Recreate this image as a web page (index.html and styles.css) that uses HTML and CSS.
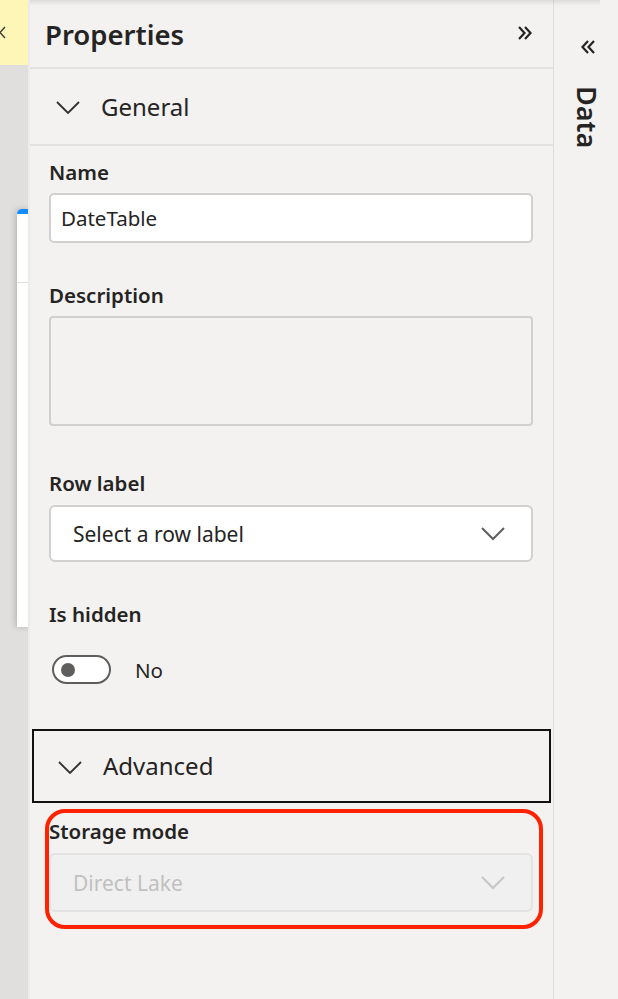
FILE: index.html
```html
<!DOCTYPE html>
<html lang="en">
<head>
<meta charset="utf-8">
<title>Properties</title>
<link rel="stylesheet" href="styles.css">
</head>
<body>
<div class="app">
  <div class="strip">
    <div class="strip-top">
      <svg class="strip-chev" width="8" height="14" viewBox="0 0 8 14"><polyline points="6,1 1,6.5 6,12" fill="none" stroke="#3b3a39" stroke-width="1.4"/></svg>
    </div>
    <div class="strip-card">
      <div class="strip-card-head"></div>
    </div>
  </div>

  <div class="props">
    <div class="props-head">
      <span class="props-title">Properties</span>
      <svg class="dbl" width="16" height="14" viewBox="0 0 16 14"><path d="M2 1 L7.5 7 L2 13 M8 1 L13.5 7 L8 13" fill="none" stroke="#252423" stroke-width="2.2"/></svg>
    </div>

    <div class="section">
      <svg class="sec-chev" width="24" height="13" viewBox="0 0 24 13"><polyline points="1,1 12,12 23,1" fill="none" stroke="#323130" stroke-width="1.8"/></svg>
      <span class="sec-title">General</span>
    </div>

    <div class="form">
      <div class="label l-name">Name</div>
      <div class="input">DateTable</div>

      <div class="label l-desc">Description</div>
      <div class="textarea"></div>

      <div class="label l-row">Row label</div>
      <div class="select">
        <span>Select a row label</span>
        <svg class="dd-chev" width="24" height="14" viewBox="0 0 24 14"><polyline points="1,1 12,12 23,1" fill="none" stroke="#605e5c" stroke-width="2"/></svg>
      </div>

      <div class="label l-hidden">Is hidden</div>
      <div class="toggle-row">
        <div class="toggle"><div class="knob"></div></div>
        <span class="toggle-text">No</span>
      </div>
    </div>

    <div class="section section-adv">
      <svg class="sec-chev" width="24" height="13" viewBox="0 0 24 13"><polyline points="1,1 12,12 23,1" fill="none" stroke="#323130" stroke-width="1.8"/></svg>
      <span class="sec-title">Advanced</span>
    </div>

    <div class="storage">
      <div class="label l-storage">Storage mode</div>
      <div class="select select-disabled">
        <span>Direct Lake</span>
        <svg class="dd-chev" width="24" height="14" viewBox="0 0 24 14"><polyline points="1,1 12,12 23,1" fill="none" stroke="#c8c6c4" stroke-width="2"/></svg>
      </div>
      <div class="highlight"></div>
    </div>
  </div>

  <div class="side">
    <svg class="side-chev" width="16" height="14" viewBox="0 0 16 14"><path d="M14 1 L8.5 7 L14 13 M8 1 L2.5 7 L8 13" fill="none" stroke="#252423" stroke-width="2.2"/></svg>
    <span class="side-title">Data</span>
  </div>

  <div class="top-shadow"></div>
</div>
</body>
</html>
```

FILE: styles.css
```css
* { box-sizing: border-box; }

html, body {
  margin: 0;
  padding: 0;
}

body {
  width: 618px;
  height: 999px;
  overflow: hidden;
  font-family: "Noto Sans", "Open Sans", sans-serif;
  color: #252423;
  background: #f3f2f1;
}

.app {
  position: relative;
  display: grid;
  grid-template-columns: 30px 524px 64px;
  height: 999px;
}

/* left strip */
.strip {
  background: #e1dfdd;
  border-right: 2px solid #edebe9;
  display: flex;
  flex-direction: column;
  overflow: hidden;
}

.strip-top {
  height: 65px;
  background: #fdf6b6;
  display: flex;
  align-items: flex-start;
  padding-top: 26px;
  margin-left: -1px;
}

.strip-card {
  margin-top: 144px;
  margin-left: 17px;
  width: 14px;
  height: 418px;
  background: #ffffff;
  border-top: 5px solid #118dff;
  border-top-left-radius: 5px;
  box-shadow: -2px 0 6px rgba(0, 0, 0, 0.18);
}

.strip-card-head {
  height: 69px;
  border-bottom: 1px solid #e1dfdd;
}

/* properties panel */
.props {
  background: #f3f2f1;
  border-right: 1px solid #e1dfdd;
  display: flex;
  flex-direction: column;
}

.props-head {
  height: 69px;
  border-bottom: 2px solid #e4e2e0;
  display: flex;
  align-items: center;
  justify-content: space-between;
  padding: 0 20px 0 15px;
}

.props-title {
  font-size: 27.5px;
  font-weight: 600;
  line-height: 36px;
  margin-top: 2px;
}

.dbl { margin-top: -2px; }

.section {
  height: 77px;
  border-bottom: 2px solid #e4e2e0;
  display: flex;
  align-items: center;
  padding-left: 26px;
  gap: 21px;
}

.sec-title {
  font-size: 24px;
  line-height: 32px;
  color: #252423;
}

.sec-chev { margin-top: 2px; }

.form {
  display: flex;
  flex-direction: column;
  padding: 0 20px 0 19px;
}

.label {
  font-size: 20.5px;
  font-weight: 600;
  line-height: 26px;
  color: #252423;
}

.l-name { margin-top: 13px; margin-bottom: 8px; }
.l-desc { margin-top: 39px; margin-bottom: 8px; }
.l-row { margin-top: 44px; margin-bottom: 9px; }
.l-hidden { margin-top: 39px; margin-bottom: 28px; }

.input {
  height: 50px;
  background: #ffffff;
  border: 2px solid #d2d0ce;
  border-radius: 5px;
  padding-left: 10px;
  display: flex;
  align-items: center;
  font-size: 20.5px;
}

.textarea {
  height: 110px;
  background: #f3f2f1;
  border: 2px solid #d2d0ce;
  border-radius: 4px;
}

.select {
  height: 57px;
  background: #ffffff;
  border: 2px solid #d2d0ce;
  border-radius: 6px;
  display: flex;
  align-items: center;
  justify-content: space-between;
  padding: 0 26px 0 22px;
  font-size: 21px;
}

.toggle-row {
  display: flex;
  align-items: center;
  gap: 24px;
  padding-left: 3px;
}

.toggle {
  width: 59px;
  height: 29px;
  border: 2px solid #605e5c;
  border-radius: 15px;
  display: flex;
  align-items: center;
  padding-left: 7px;
  background: #ffffff;
}

.knob {
  width: 14px;
  height: 14px;
  border-radius: 50%;
  background: #605e5c;
}

.toggle-text {
  font-size: 20.5px;
  line-height: 28px;
}

.section-adv {
  margin: 45px 2px 0;
  height: 74px;
  border: 2px solid #111111;
  padding-left: 24px;
}

.storage {
  position: relative;
  display: flex;
  flex-direction: column;
  padding: 0 20px 0 19px;
}

.l-storage { margin-top: 15px; margin-bottom: 9px; }

.select-disabled {
  height: 59px;
  background: #f0f0f0;
  border: 2px solid #e3e3e3;
  color: #c2c0be;
}

.highlight {
  position: absolute;
  left: 15px;
  top: 6px;
  width: 498px;
  height: 120px;
  border: 4px solid #ff2200;
  border-radius: 20px;
}

/* right side */
.side {
  background: #f3f2f1;
  display: flex;
  flex-direction: column;
  align-items: center;
  padding-top: 40px;
  gap: 32px;
}

.side-chev { margin-left: 4px; }

.side-title {
  writing-mode: vertical-rl;
  font-size: 27px;
  font-weight: 600;
  line-height: 30px;
  margin-left: 2px;
}

.top-shadow {
  position: absolute;
  left: 30px;
  top: 0;
  width: 570px;
  height: 6px;
  background: linear-gradient(rgba(0, 0, 0, 0.09), rgba(0, 0, 0, 0));
  pointer-events: none;
}
```
